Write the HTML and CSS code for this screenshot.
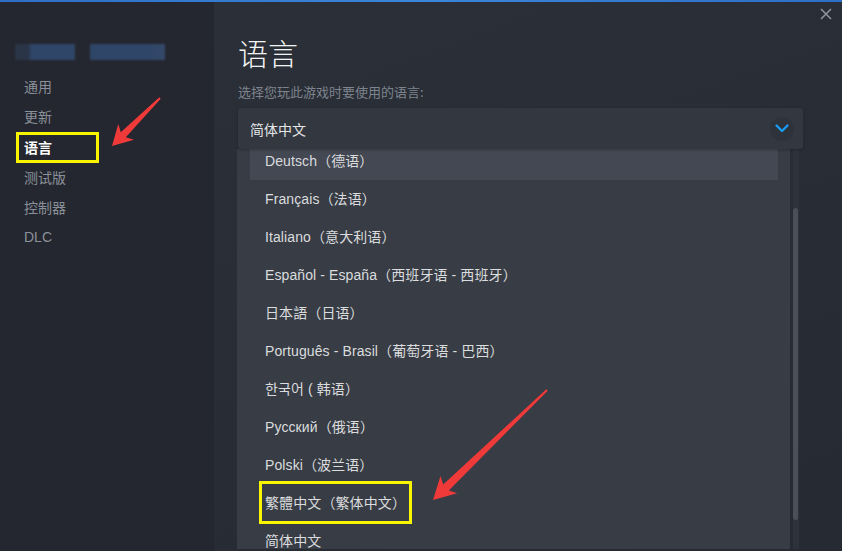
FILE: index.html
```html
<!DOCTYPE html>
<html lang="zh-CN">
<head>
<meta charset="utf-8">
<title>语言</title>
<link rel="stylesheet" href="styles.css">
</head>
<body>
<div class="topline"></div>
<div class="app">
  <aside class="sidebar">
    <div class="game-title">
      <span class="blur blur-a"></span>
      <span class="blur blur-b"></span>
    </div>
    <nav class="nav">
      <div class="nav-item">通用</div>
      <div class="nav-item">更新</div>
      <div class="nav-item active">语言</div>
      <div class="nav-item">测试版</div>
      <div class="nav-item">控制器</div>
      <div class="nav-item latin">DLC</div>
    </nav>
  </aside>
  <main class="main">
    <button class="close" aria-label="关闭">
      <svg width="12" height="12" viewBox="0 0 12 12"><path d="M1 1L11 11M11 1L1 11" stroke="#8e949c" stroke-width="1.6" fill="none"/></svg>
    </button>
    <h1 class="title">语言</h1>
    <p class="subtitle">选择您玩此游戏时要使用的语言:</p>
    <div class="select">
      <span class="select-value">简体中文</span>
      <span class="chevron">
        <svg width="14" height="9" viewBox="0 0 14 9"><path d="M1.5 1.5L7 7L12.5 1.5" stroke="#1a9fff" stroke-width="2.2" fill="none" stroke-linecap="round" stroke-linejoin="round"/></svg>
      </span>
    </div>
    <div class="list-wrap">
      <div class="popup">
        <ul class="options">
          <li class="option hover">Deutsch（德语）</li>
          <li class="option">Français（法语）</li>
          <li class="option">Italiano（意大利语）</li>
          <li class="option">Español - España（西班牙语 - 西班牙）</li>
          <li class="option">日本語（日语）</li>
          <li class="option">Português - Brasil（葡萄牙语 - 巴西）</li>
          <li class="option">한국어 ( 韩语）</li>
          <li class="option">Русский（俄语）</li>
          <li class="option">Polski（波兰语）</li>
          <li class="option">繁體中文（繁体中文）</li>
          <li class="option">简体中文</li>
        </ul>
      </div>
      <div class="track"><div class="thumb"></div></div>
    </div>
  </main>
</div>
<svg class="annotations" width="842" height="551" viewBox="0 0 842 551">
  <rect x="17.5" y="133.5" width="80" height="28" fill="none" stroke="#f7f500" stroke-width="3"/>
  <rect x="260.5" y="482.5" width="150" height="40" fill="none" stroke="#f7f500" stroke-width="3"/>
  <polygon fill="#f03a3a" points="159.3,97.3 160.7,98.7 125.8,137.2 133.9,139.7 112,146 118.3,124.1 120.8,132.2"/>
  <polygon fill="#f03a3a" points="546.3,389.3 547.7,390.7 448.8,490.4 457.1,493.3 433,500 440.5,476.1 443.2,484.6"/>
</svg>
</body>
</html>
```

FILE: styles.css
```css
html, body {
  margin: 0;
  padding: 0;
}
body {
  width: 842px;
  height: 551px;
  overflow: hidden;
  position: relative;
  background: #24272f;
  font-family: "Liberation Sans", "Noto Sans CJK SC", sans-serif;
  color: #dcdedf;
}
.topline {
  height: 2px;
  background: linear-gradient(90deg, #2d6fc4, #3b86d8 50%, #2d6fc4);
}
.app {
  display: flex;
  height: 549px;
}
.sidebar {
  width: 214px;
  flex: none;
  background: #24272f;
  padding-top: 42px;
  box-sizing: border-box;
}
.game-title {
  display: flex;
  gap: 15px;
  padding-left: 15px;
  height: 16px;
}
.blur {
  display: block;
  height: 16px;
  background: #304669;
  filter: blur(0.8px);
}
.blur-a {
  width: 60px;
  background: linear-gradient(90deg, #2a3548 0, #2a3548 14px, #304669 16px);
}
.blur-b {
  width: 75px;
  background: linear-gradient(90deg, #304669 0, #304669 80%, #35496a);
}
.nav {
  margin-top: 11px;
  display: flex;
  flex-direction: column;
}
.nav-item {
  height: 30.3px;
  line-height: 30px;
  padding-left: 24px;
  font-size: 14px;
  color: #8a9099;
  font-family: "Noto Sans CJK SC", sans-serif;
}
.nav-item.latin {
  font-family: "Liberation Sans", sans-serif;
}
.nav-item.active {
  color: #ffffff;
  font-weight: bold;
}
.main {
  flex: 1;
  position: relative;
  background: linear-gradient(160deg, #2b2f38 0%, #282c35 60%, #262a32 100%);
  padding-left: 24px;
  padding-top: 30px;
  box-sizing: border-box;
  overflow: hidden;
}
.close {
  position: absolute;
  top: 6px;
  right: 10px;
  width: 12px;
  height: 12px;
  padding: 0;
  border: 0;
  background: none;
  display: flex;
}
.title {
  margin: 0;
  font-family: "Noto Sans CJK SC", sans-serif;
  font-weight: 300;
  font-size: 30px;
  line-height: 40px;
  color: #f2f3f4;
}
.subtitle {
  margin: 10px 0 0 0;
  font-family: "Noto Sans CJK SC", sans-serif;
  font-size: 13px;
  line-height: 20px;
  color: #7d848d;
}
.select {
  margin-top: 6px;
  width: 565px;
  height: 41px;
  box-sizing: border-box;
  background: #33373f;
  border-radius: 3px;
  display: flex;
  align-items: center;
  justify-content: space-between;
  padding: 0 9px 0 12px;
  position: relative;
  z-index: 2;
  box-shadow: 0 1px 3px rgba(0,0,0,0.25);
}
.select-value {
  font-family: "Noto Sans CJK SC", sans-serif;
  font-size: 14px;
  color: #e4e6e8;
}
.chevron {
  width: 24px;
  height: 24px;
  border-radius: 50%;
  background: rgba(20, 24, 30, 0.12);
  display: flex;
  align-items: center;
  justify-content: center;
}
.list-wrap {
  display: flex;
  height: 400px;
  margin-left: -1px;
}
.popup {
  width: 553px;
  background: #383c45;
  overflow: hidden;
  padding: 0 12px;
  box-sizing: border-box;
}
.options {
  list-style: none;
  margin: -7px 0 0 0;
  padding: 0 0 0 1px;
}
.option {
  height: 38px;
  line-height: 38px;
  padding-left: 15px;
  font-size: 14px;
  letter-spacing: 0.1px;
  color: #dadcde;
  font-family: "Liberation Sans", "Noto Sans CJK SC", "Noto Sans CJK KR", sans-serif;
  white-space: nowrap;
}
.option.hover {
  background: #434852;
}
.track {
  width: 6px;
  margin-left: 3px;
  background: #2e323a;
}
.thumb {
  margin-top: 59px;
  height: 312px;
  width: 5px;
  border-radius: 3px;
  background: #4a4f58;
}
.annotations {
  position: absolute;
  left: 0;
  top: 0;
  pointer-events: none;
}
```
